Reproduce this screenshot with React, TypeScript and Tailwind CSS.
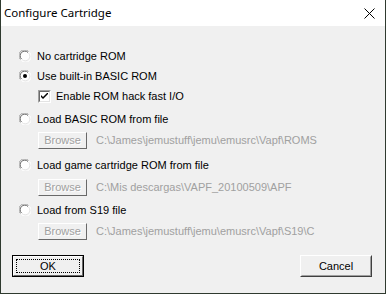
import React from "react";

function Radio({ checked }: { checked?: boolean }) {
    return (
        <svg width="12" height="12" viewBox="0 0 12 12" className="shrink-0">
            <circle cx="6" cy="6" r="5.5" fill="#ffffff" />
            <path d="M1.5 9.5 A5 5 0 0 1 9.5 1.5" stroke="#a0a0a0" strokeWidth="1" fill="none" />
            <path d="M2.5 9 A4 4 0 0 1 9 2.5" stroke="#696969" strokeWidth="1" fill="none" />
            <path d="M10.5 2.5 A5 5 0 0 1 2.5 10.5" stroke="#ffffff" strokeWidth="1" fill="none" />
            <path d="M9.5 3 A4 4 0 0 1 3 9.5" stroke="#e3e3e3" strokeWidth="1" fill="none" />
            {checked && <circle cx="6" cy="6" r="2" fill="#000000" />}
        </svg>
    );
}

function Checkbox({ checked }: { checked?: boolean }) {
    return (
        <div className="w-[13px] h-[13px] shrink-0 border border-t-[#a0a0a0] border-l-[#a0a0a0] border-r-white border-b-white">
            <div className="w-full h-full bg-white border border-t-[#696969] border-l-[#696969] border-r-[#e3e3e3] border-b-[#e3e3e3] flex items-center justify-center">
                {checked && (
                    <svg width="7" height="7" viewBox="0 0 7 7">
                        <path d="M0 2 L0 4 L2 6 L7 1 L7 -1 L2 4 Z" fill="#000" />
                    </svg>
                )}
            </div>
        </div>
    );
}

function RadioRow({ label, checked, className }: { label: string; checked?: boolean; className?: string }) {
    return (
        <div className={"h-[20px] flex items-center pl-[18px] gap-[6px] " + (className || "")}>
            <Radio checked={checked} />
            <span>{label}</span>
        </div>
    );
}

function BrowseRow({ path, className }: { path: string; className?: string }) {
    return (
        <div className={"h-[17px] flex items-center pl-[37px] " + (className || "")}>
            <div className="w-[49px] h-[17px] border border-t-white border-l-white border-r-[#696969] border-b-[#696969] flex items-center justify-center text-[#a0a0a0] [text-shadow:1px_1px_0_#ffffff]">
                Browse
            </div>
            <span className="ml-[9px] text-[#a0a0a0] whitespace-nowrap">{path}</span>
        </div>
    );
}

export default function App() {
    return (
        <div className="w-[386px] h-[294px] flex flex-col bg-[#f0f0f0] border-x border-b border-[#2f3a2f] overflow-hidden">
            <div className="h-[26px] shrink-0 bg-white flex items-center justify-between pl-[3px] pr-[10px] font-['Noto_Sans',sans-serif] text-[11.5px] text-black">
                <span>Configure Cartridge</span>
                <svg width="11" height="11" viewBox="0 0 11 11">
                    <path d="M0.5 0.5 L10.5 10.5 M10.5 0.5 L0.5 10.5" stroke="#000" strokeWidth="1" />
                </svg>
            </div>

            <div className="flex flex-col pt-[20px] font-['Liberation_Sans',Arial,sans-serif] text-[11px] text-black">
                <RadioRow label="No cartridge ROM" />
                <RadioRow label="Use built-in BASIC ROM" checked />
                <div className="h-[20px] flex items-center pl-[37px] gap-[5px]">
                    <Checkbox checked />
                    <span>Enable ROM hack fast I/O</span>
                </div>
                <RadioRow label="Load BASIC ROM from file" className="mt-[3px]" />
                <BrowseRow path="C:\James\jemustuff\jemu\emusrc\Vapf\ROMS" className="mt-[3px]" />
                <RadioRow label="Load game cartridge ROM from file" className="mt-[6px]" />
                <BrowseRow path="C:\Mis descargas\VAPF_20100509\APF" className="mt-[4px]" />
                <RadioRow label="Load from S19 file" className="mt-[4px]" />
                <BrowseRow path="C:\James\jemustuff\jemu\emusrc\Vapf\S19\C" className="mt-[3px]" />

                <div className="flex justify-between pl-[11px] pr-[13px] mt-[15px]">
                    <div className="w-[72px] h-[22px] border border-black">
                        <div className="w-full h-full border border-t-white border-l-white border-r-[#696969] border-b-[#696969] p-[2px]">
                            <div className="w-full h-full border border-dotted border-black flex items-center justify-center">
                                OK
                            </div>
                        </div>
                    </div>
                    <div className="w-[72px] h-[22px] border border-t-white border-l-white border-r-[#404040] border-b-[#404040]">
                        <div className="w-full h-full border border-t-[#f0f0f0] border-l-[#f0f0f0] border-r-[#a0a0a0] border-b-[#a0a0a0] flex items-center justify-center">
                            Cancel
                        </div>
                    </div>
                </div>
            </div>
        </div>
    );
}
